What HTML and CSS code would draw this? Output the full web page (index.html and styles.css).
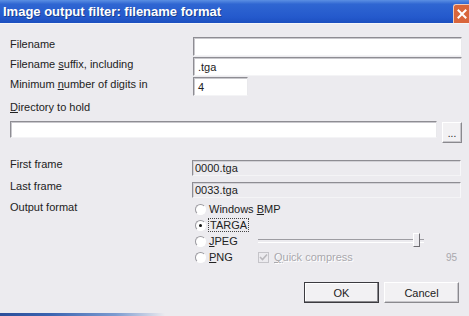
FILE: index.html
```html
<!DOCTYPE html>
<html lang="en">
<head>
    <meta charset="UTF-8">
    <title>Image output filter: filename format</title>
    <link rel="stylesheet" href="styles.css">
</head>
<body>
    <div class="window">
        <div class="titlebar">
            <span class="title">Image output filter: filename format</span>
            <div class="close"><svg width="10" height="10" viewBox="0 0 10 10"><path d="M1.5 1.5 L8.5 8.5 M8.5 1.5 L1.5 8.5" stroke="#fff" stroke-width="2" stroke-linecap="square"/></svg></div>
        </div>

        <div class="content">
            <div class="row">
                <span class="label">Filename</span>
                <div class="field wide"></div>
            </div>
            <div class="row">
                <span class="label">Filename <u>s</u>uffix, including</span>
                <div class="field wide">.tga</div>
            </div>
            <div class="row">
                <span class="label">Minimum <u>n</u>umber of digits in</span>
                <div class="field small">4</div>
            </div>

            <div class="dir-label"><u>D</u>irectory to hold</div>
            <div class="dir-row">
                <div class="field dir"></div>
                <button class="btn browse" type="button">...</button>
            </div>

            <div class="row frame first">
                <span class="label">First frame</span>
                <div class="field readonly">0000.tga</div>
            </div>
            <div class="row frame">
                <span class="label">Last frame</span>
                <div class="field readonly">0033.tga</div>
            </div>

            <div class="format">
                <span class="label">Output format</span>
                <div class="options">
                    <div class="opt"><span class="radio"></span><span>Windows <u>B</u>MP</span></div>
                    <div class="opt"><span class="radio checked"></span><span class="focus">TARGA</span></div>
                    <div class="opt">
                        <span class="radio"></span><span class="opt-text"><u>J</u>PEG</span>
                        <div class="slider">
                            <div class="track"></div>
                            <div class="thumb"></div>
                        </div>
                    </div>
                    <div class="opt">
                        <span class="radio"></span><span class="opt-text"><u>P</u>NG</span>
                        <span class="check"><svg width="9" height="9" viewBox="0 0 9 9"><path d="M1 4 L3.5 6.5 L8 1.5" fill="none" stroke="#b9b8bc" stroke-width="1.6"/></svg></span>
                        <span class="disabled"><u>Q</u>uick compress</span>
                        <span class="quality">95</span>
                    </div>
                </div>
            </div>

            <div class="buttons">
                <button class="btn default" type="button">OK</button>
                <button class="btn" type="button">Cancel</button>
            </div>
        </div>
        <div class="taskbar"></div>
    </div>
</body>
</html>
```

FILE: styles.css
```css
html, body {
    margin: 0;
    padding: 0;
}

body {
    width: 469px;
    height: 316px;
    overflow: hidden;
    background: #ecebef;
    font-family: "Liberation Sans", Arial, sans-serif;
    font-size: 11px;
    color: #222;
}

.window {
    position: relative;
    height: 316px;
}

.titlebar {
    height: 23px;
    display: flex;
    align-items: center;
    justify-content: space-between;
    background: linear-gradient(to bottom, #5b8fe3 0%, #2f66d2 18%, #2459cc 75%, #1c4fbf 100%);
    border-bottom: 1px solid #f6f6f8;
}

.title {
    color: #fff;
    font-size: 13px;
    font-weight: bold;
    padding-left: 3px;
    text-shadow: 1px 1px 0 #1a3f8f;
}

.close {
    flex: none;
    box-sizing: border-box;
    width: 16px;
    height: 19px;
    margin-top: 3px;
    background: #d9663c;
    border-left: 1px solid #f3c9b4;
    border-top: 1px solid #f3c9b4;
    border-radius: 3px 0 0 0;
    display: flex;
    align-items: center;
    justify-content: center;
}

.content {
    padding: 13px 7px 0 10px;
}

.row {
    display: flex;
    align-items: flex-start;
    height: 20px;
}

.label {
    width: 183px;
    flex: none;
    padding-top: 1px;
}

.field {
    box-sizing: border-box;
    height: 19px;
    background: #fff;
    border-top: 1px solid #8e8d93;
    border-left: 1px solid #8e8d93;
    border-right: 1px solid #e9e9ec;
    border-bottom: 1px solid #f4f4f6;
    box-shadow: inset 1px 1px 0 #c9c8cd;
    padding: 2px 4px;
    line-height: 14px;
}

.wide {
    width: 269px;
}

.small {
    width: 55px;
}

.dir-label {
    margin-top: 3px;
    height: 17px;
    line-height: 14px;
}

.dir-row {
    display: flex;
    align-items: flex-start;
    gap: 5px;
    margin-top: 4px;
    height: 22px;
}

.dir {
    width: 427px;
    height: 17px;
}

.btn {
    box-sizing: border-box;
    font-family: "Liberation Sans", Arial, sans-serif;
    font-size: 11px;
    color: #222;
    background: #f2f1f3;
    border: 1px solid #fff;
    border-right-color: #8a898e;
    border-bottom-color: #8a898e;
    box-shadow: inset -1px -1px 0 #c8c7cc;
    padding: 0;
}

.browse {
    width: 20px;
    height: 21px;
    margin-top: 1px;
    line-height: 22px;
    font-size: 10px;
}

.frame {
    height: 22px;
}

.first {
    margin-top: 17px;
}

.frame .label {
    padding-top: 0;
    margin-top: -2px;
}

.readonly {
    width: 269px;
    margin-left: -1px;
    height: 16px;
    background: #ecebef;
    border-right-color: #f7f7f9;
    box-shadow: inset 1px 1px 0 #d2d1d6;
    padding: 1px 2px;
    line-height: 13px;
}

.format {
    display: flex;
    margin-top: -3px;
}

.format .label {
    padding-top: 0;
}

.options {
    margin-left: 2px;
}

.opt {
    display: flex;
    align-items: center;
    height: 16px;
    position: relative;
}

.radio {
    box-sizing: border-box;
    width: 11px;
    height: 11px;
    border-radius: 50%;
    background: #fff;
    border: 1px solid #fff;
    border-top-color: #9a999f;
    border-left-color: #9a999f;
    margin-right: 3px;
    display: flex;
    align-items: center;
    justify-content: center;
}

.radio.checked::after {
    content: "";
    width: 3px;
    height: 3px;
    border-radius: 50%;
    background: #111;
}

.focus {
    outline: 1px dotted #444;
    outline-offset: 0;
    padding: 0 1px;
}

.opt-text {
    width: 46px;
}

.slider {
    position: relative;
    width: 166px;
    height: 16px;
    margin-left: 3px;
}

.track {
    position: absolute;
    left: 0;
    right: 0;
    top: 6px;
    height: 2px;
    border-top: 1px solid #9d9ca2;
    border-bottom: 1px solid #fff;
}

.thumb {
    position: absolute;
    left: 155px;
    top: 0;
    width: 5px;
    height: 12px;
    background: #ecebef;
    border: 1px solid #fff;
    border-right-color: #6e6d72;
    border-bottom-color: #6e6d72;
}

.check {
    box-sizing: border-box;
    width: 11px;
    height: 11px;
    margin-left: 3px;
    margin-right: 5px;
    border: 1px solid #c5c4c9;
    background: #ecebef;
    display: flex;
    align-items: center;
    justify-content: center;
}

.disabled {
    color: #a9a8ad;
    text-shadow: 1px 1px 0 #fff;
}

.quality {
    position: absolute;
    left: 251px;
    top: 3px;
    color: #a9a8ad;
    font-size: 10px;
}

.buttons {
    display: flex;
    justify-content: flex-end;
    gap: 5px;
    margin-top: 17px;
    padding-right: 3px;
}

.buttons .btn {
    width: 75px;
    height: 21px;
}

.buttons .default {
    border: 1px solid #3c3b40;
    box-shadow: inset -1px -1px 0 #8a898e, inset 1px 1px 0 #fff;
}

.taskbar {
    position: absolute;
    left: 0;
    bottom: 0;
    width: 165px;
    height: 3px;
    background: linear-gradient(to right, #2c4f9a 0%, #3a63b0 30%, #7c9bd0 70%, rgba(200, 210, 230, 0) 100%);
}
```
